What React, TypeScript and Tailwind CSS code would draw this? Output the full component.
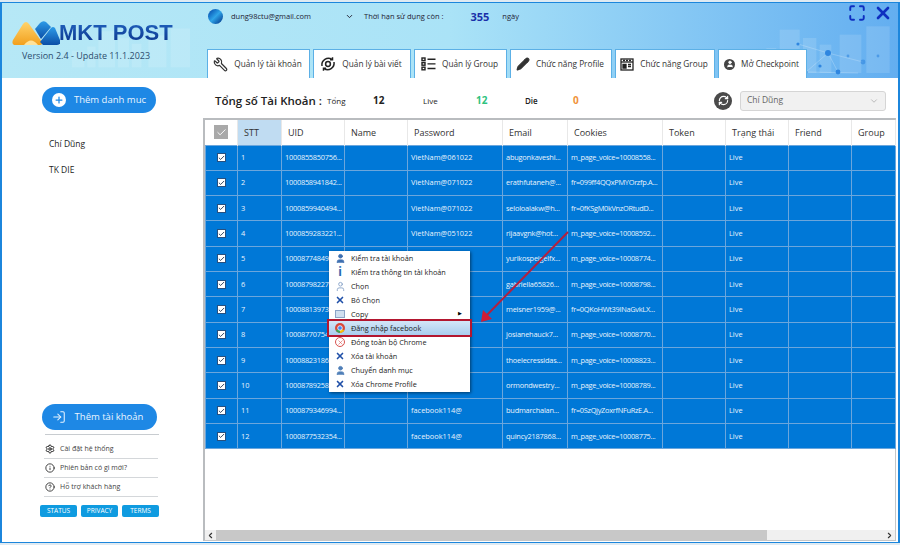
import { Check, ChevronDown, ChevronLeft, ChevronRight, CircleHelp, Info, LogIn, Maximize, Pencil, Plus, RefreshCw, Settings, User, Wrench, X } from "lucide-react";

const columns = [
  { label: "STT", w: "w-[44px]" },
  { label: "UID", w: "w-[63px]" },
  { label: "Name", w: "w-[63px]" },
  { label: "Password", w: "w-[95px]" },
  { label: "Email", w: "w-[65px]" },
  { label: "Cookies", w: "w-[95px]" },
  { label: "Token", w: "w-[63px]" },
  { label: "Trạng thái", w: "w-[63px]" },
  { label: "Friend", w: "w-[63px]" },
  { label: "Group", w: "w-[44px]" },
];

const rows = [
  ["1", "1000855850756...", "VietNam@061022", "abugonkaveshi...", "m_page_voice=10008558..."],
  ["2", "1000858941842...", "VietNam@071022", "erathfutaneh@...", "fr=099ff4QQxPMYOrzfp.A..."],
  ["3", "1000859940494...", "VietNam@071022", "seloloalakw@h...", "fr=0fKSgM0kVnzORtudD..."],
  ["4", "1000859283221...", "VietNam@051022", "rijaavgnk@hot...", "m_page_voice=10008592..."],
  ["5", "100087748495", "", "yurikospeigelfx...", "m_page_voice=10008774..."],
  ["6", "100087982275", "", "gabriella65826...", "m_page_voice=10008798..."],
  ["7", "100088139735", "", "meisner1959@...", "fr=0QKoHWt39INaGvkLX..."],
  ["8", "100087707547", "", "josianehauck7...", "m_page_voice=10008770..."],
  ["9", "100088231865", "", "thoelecressidas...", "m_page_voice=10008823..."],
  ["10", "100087892580", "", "ormondwestry...", "m_page_voice=10008789..."],
  ["11", "1000879346994...", "facebook114@", "budmarchalan...", "fr=0SzQjyZoxrfNFuRzE.A..."],
  ["12", "1000877532354...", "facebook114@", "quincy2187868...", "m_page_voice=10008775..."],
];

const tabs = [
  { label: "Quản lý tài khoản", w: "w-[103px]", icon: <Wrench size={15} strokeWidth={2} className="-scale-x-100" /> },
  {
    label: "Quản lý bài viết",
    w: "w-[98px]",
    icon: (
      <svg width="16" height="16" viewBox="0 0 16 16" fill="none" stroke="#222" strokeWidth="1.5">
        <circle cx="8" cy="8" r="2.4" />
        <path d="M2 10a6.5 6.5 0 0 1 10-6.5M14 6a6.5 6.5 0 0 1-10 6.5" />
        <path d="M12.5 1.2v2.6H10M3.5 14.8v-2.6H6" />
      </svg>
    ),
  },
  {
    label: "Quản lý Group",
    w: "w-[93px]",
    icon: (
      <svg width="15" height="14" viewBox="0 0 15 14" fill="none" stroke="#222" strokeWidth="1.4">
        <rect x="1" y="1" width="3" height="2.6" />
        <rect x="1" y="5.6" width="3" height="2.6" />
        <rect x="1" y="10.2" width="3" height="2.6" />
        <path d="M6.5 2.3h8M6.5 6.9h8M6.5 11.5h8" />
      </svg>
    ),
  },
  { label: "Chức năng Profile", w: "w-[102px]", icon: <Pencil size={14} fill="#333" stroke="#333" /> },
  {
    label: "Chức năng Group",
    w: "w-[100px]",
    icon: (
      <svg width="14" height="13" viewBox="0 0 14 13" fill="none" stroke="#222" strokeWidth="1.3">
        <rect x="1" y="1" width="12" height="11" />
        <path d="M1 4h12" />
        <path d="M3 2.5h8" strokeDasharray="2 1" />
        <path d="M3 6.5h3v3.5H3zM8 6.5h3M8 8.5h3" fill="#222" />
      </svg>
    ),
  },
  {
    label: "Mở Checkpoint",
    w: "w-[89px]",
    icon: (
      <span className="flex h-[11px] w-[11px] items-center justify-center rounded-full bg-[#444]">
        <User size={8} fill="#fff" stroke="#fff" />
      </span>
    ),
  },
];

const TinyX = () => <X size={10} strokeWidth={4} className="text-[#1f4fa8]" />;

const menu = [
  { label: "Kiểm tra tài khoản", icon: <User size={11} fill="#3d6fb0" stroke="#3d6fb0" /> },
  { label: "Kiểm tra thông tin tài khoản", icon: <span className="text-[12px] leading-none font-bold text-[#2a68b0]">i</span> },
  { label: "Chọn", icon: <User size={11} stroke="#8aa4c8" /> },
  { label: "Bỏ Chọn", icon: <TinyX /> },
  { label: "Copy", icon: <span className="h-[8px] w-[10px] border border-[#8aa4c8] bg-[#cfdff0]" />, arrow: true },
  {
    label: "Đăng nhập facebook",
    active: true,
    icon: (
      <svg width="10" height="10" viewBox="0 0 10 10">
        <circle cx="5" cy="5" r="5" fill="#d9483b" />
        <path d="M5 5L.7 7.5A5 5 0 0 0 5 10z" fill="#3aa757" />
        <path d="M5 5l4.3 2.5A5 5 0 0 1 5 10z" fill="#f4c20d" />
        <circle cx="5" cy="5" r="2.3" fill="#4285f4" stroke="#fff" strokeWidth=".8" />
      </svg>
    ),
  },
  {
    label: "Đóng toàn bộ Chrome",
    icon: (
      <span className="flex h-[10px] w-[10px] items-center justify-center rounded-full border border-[#d9534f]">
        <X size={7} strokeWidth={2} className="text-[#d9534f]" />
      </span>
    ),
  },
  { label: "Xóa tài khoản", icon: <TinyX /> },
  { label: "Chuyển danh mục", icon: <User size={11} fill="#4f7fb8" stroke="#4f7fb8" /> },
  { label: "Xóa Chrome Profile", icon: <TinyX /> },
];

const helpLinks = [
  { label: "Cài đặt hệ thống", icon: <Settings size={10} strokeWidth={2.4} /> },
  { label: "Phiên bản có gì mới?", icon: <Info size={10} strokeWidth={2} /> },
  { label: "Hỗ trợ khách hàng", icon: <CircleHelp size={10} strokeWidth={2} /> },
];

function Skyline({ className }: { className: string }) {
  return (
    <svg className={className} viewBox="0 0 180 60" fill="#ffffff" fillOpacity="0.13">
      <rect x="0" y="36" width="18" height="24" />
      <rect x="22" y="30" width="12" height="30" />
      <rect x="38" y="8" width="24" height="52" />
      <rect x="66" y="18" width="16" height="42" />
      <rect x="86" y="26" width="14" height="34" />
      <rect x="110" y="14" width="26" height="46" />
      <rect x="142" y="4" width="28" height="56" />
    </svg>
  );
}

// dots and lines at the right of the header
function Network({ className }: { className: string }) {
  return (
    <svg className={className} viewBox="0 0 120 40" fill="#2f86e0">
      <path d="M20 6 50 15 85 24M50 15 28 34 80 35M50 15 60 34" stroke="#ffffff" strokeOpacity="0.35" strokeWidth="0.6" fill="none" />
      <circle cx="20" cy="6" r="1.6" />
      <circle cx="50" cy="15" r="3" />
      <circle cx="42" cy="28" r="1.6" />
      <circle cx="28" cy="34" r="1.6" />
      <circle cx="60" cy="34" r="2.4" />
      <circle cx="85" cy="24" r="2.4" fillOpacity="0.6" />
      <circle cx="70" cy="18" r="1.4" fillOpacity="0.6" />
      <circle cx="100" cy="18" r="1.4" fillOpacity="0.6" />
    </svg>
  );
}

function Logo() {
  return (
    <svg width="48" height="24" viewBox="0 0 48 24">
      <defs>
        <linearGradient id="lg-o" x1="0" y1="0" x2="0" y2="1">
          <stop offset="0" stopColor="#ffd36b" />
          <stop offset="1" stopColor="#f2a01e" />
        </linearGradient>
        <linearGradient id="lg-b" x1="0" y1="0" x2="0" y2="1">
          <stop offset="0" stopColor="#2d9be8" />
          <stop offset="1" stopColor="#0b4ea6" />
        </linearGradient>
      </defs>
      <path d="M1 19 11 3q3-4 6 0l13 18q1 3-2 3H4q-5 0-3-5z" fill="url(#lg-o)" />
      <path d="M12 24q7-9 14 0z" fill="#ffe29a" />
      <path d="M23 8 28 2q3-3 6-1l5 5-10 12z" fill="url(#lg-b)" />
      <path d="M31 24 28 21 39 7q2-2 4 0l5 12q1 5-3 5z" fill="url(#lg-b)" />
    </svg>
  );
}

function Sidebar() {
  return (
    <aside className="flex w-[201px] shrink-0 flex-col pt-[9px]">
      <button className="ml-[40px] flex h-[26px] w-[114px] items-center justify-center gap-[8px] rounded-full bg-[#1e88e5] text-[9.5px] font-medium text-[#eaf5ff]">
        <span className="flex h-[14px] w-[14px] items-center justify-center rounded-full bg-white">
          <Plus size={10} strokeWidth={3} className="text-[#1e88e5]" />
        </span>
        Thêm danh muc
      </button>
      <div className="mt-[24px] ml-[47px] flex flex-col gap-[12px] text-[8.5px] leading-[14px] font-medium text-[#222]">
        <span>Chí Dũng</span>
        <span>TK DIE</span>
      </div>
      <button className="mt-[227px] ml-[40px] flex h-[26px] w-[115px] items-center justify-center gap-[9px] rounded-full bg-[#1e88e5] pr-[4px] text-[9.5px] font-medium text-[#eaf5ff]">
        <LogIn size={14} strokeWidth={1.8} />
        Thêm tài khoản
      </button>
      <div className="mt-[4px] ml-[43px] w-[114px] border-t border-[#c8ccd0]" />
      <div className="mt-[5px] ml-[42px] w-[114px]">
        {helpLinks.map((item) => (
          <div key={item.label} className="flex h-[19px] items-center gap-[5px] border-b border-[#d4d7da] text-[7px] text-[#444]">
            <span className="flex w-[11px] justify-center text-[#222]">{item.icon}</span>
            {item.label}
          </div>
        ))}
      </div>
      <div className="mt-[8px] ml-[38px] flex gap-[4px]">
        {["STATUS", "PRIVACY", "TERMS"].map((label) => (
          <span key={label} className="flex h-[12px] w-[37px] items-center justify-center rounded-[2px] bg-[#0f9be0] text-[6.5px] text-white">
            {label}
          </span>
        ))}
      </div>
    </aside>
  );
}

function AccountTable() {
  return (
    <div className="mr-[2px] mb-[1px] flex min-h-0 flex-1 flex-col border-t-2 border-r border-b border-l-2 border-t-[#b9bcbf] border-r-[#c4c6c8] border-b-[#c4c6c8] border-l-[#b9bcbf]">
      <table className="w-[690px] table-fixed border-collapse">
        <thead>
          <tr className="h-[25px] text-[9px] font-medium text-[#333]">
            <th className="w-[32px] border-r border-[#e8e8e8]">
              <span className="mx-auto flex h-[14px] w-[14px] items-center justify-center bg-[#a9a9a9]">
                <Check size={11} strokeWidth={2} className="text-white" />
              </span>
            </th>
            {columns.map((col) => (
              <th
                key={col.label}
                className={`${col.w} border-r border-[#e8e8e8] pl-[6px] text-left font-medium ${col.label === "STT" ? "bg-[#c0dcf2]" : ""}`}
              >
                {col.label}
              </th>
            ))}
          </tr>
        </thead>
        <tbody>
          {rows.map((r) => (
            <tr key={r[0]} className="h-[25.33px] bg-[#0078d7] text-[7.4px] text-[#e8f3fc]">
              <td className="border border-[#6ba6dc]">
                <span className="mx-auto flex h-[9px] w-[9px] items-center justify-center border border-[#27507f] bg-white">
                  <Check size={8} strokeWidth={3} className="text-[#1c3048]" />
                </span>
              </td>
              <td className="border border-[#6ba6dc] pl-[3px]">{r[0]}</td>
              <td className="overflow-hidden border border-[#6ba6dc] pl-[3px] tracking-[-0.25px] whitespace-nowrap">{r[1]}</td>
              <td className="border border-[#6ba6dc]" />
              <td className="border border-[#6ba6dc] pl-[3px]">{r[2]}</td>
              <td className="overflow-hidden border border-[#6ba6dc] pl-[3px] tracking-[-0.2px] whitespace-nowrap">{r[3]}</td>
              <td className="overflow-hidden border border-[#6ba6dc] pl-[3px] tracking-[-0.3px] whitespace-nowrap">{r[4]}</td>
              <td className="border border-[#6ba6dc]" />
              <td className="border border-[#6ba6dc] pl-[3px]">Live</td>
              <td className="border border-[#6ba6dc]" />
              <td className="border border-[#6ba6dc]" />
            </tr>
          ))}
        </tbody>
      </table>
      <div className="mt-auto flex h-[10px] items-center bg-[#f0f0f0] text-[#333]">
        <ChevronLeft size={9} strokeWidth={3} className="w-[11px] shrink-0" />
        <span className="h-full w-[551px] bg-[#c8c8c8]" />
        <ChevronRight size={9} strokeWidth={3} className="mr-[1px] ml-auto" />
      </div>
    </div>
  );
}

function ContextMenu() {
  return (
    <div className="absolute top-[251px] left-[329px] w-[141px] bg-white pb-[1px] text-[7.3px] text-[#222] shadow-[1px_1px_3px_rgba(0,0,0,0.5)]">
      {menu.map((item) => (
        <div
          key={item.label}
          className={`relative flex h-[14px] items-center ${item.active ? "bg-gradient-to-b from-[#d3e6f8] to-[#a9cdee] outline-2 outline-[#b3162f]" : ""}`}
        >
          <span className="flex w-[22px] justify-center">{item.icon}</span>
          {item.label}
          {item.arrow && <span className="absolute right-[8px] text-[5px] text-black">▶</span>}
        </div>
      ))}
    </div>
  );
}

export default function App() {
  return (
    <div
      className="relative h-[545px] w-[900px] overflow-hidden bg-[#dfeaf2] pt-[2px]"
      style={{ fontFamily: '"Open Sans", "Noto Sans", sans-serif' }}
    >
      <div className="flex h-[541px] w-[900px] flex-col border-x-2 border-y border-[#1c86dc] bg-white">
        <header className="relative flex h-[75px] shrink-0 bg-gradient-to-r from-[#b6e8f6] via-[#aae3f7] to-[#63aef0]">
          <Skyline className="absolute top-[12px] left-[70px] h-[63px] w-[125px]" />
          <Skyline className="absolute top-[15px] right-0 h-[60px] w-[150px]" />
          <Network className="absolute right-0 bottom-0 h-[40px] w-[120px]" />
          <div className="relative w-[201px] shrink-0 pt-[16px] pl-[10px]">
            <div className="flex items-center">
              <Logo />
              <span
                className="ml-[-1px] bg-gradient-to-b from-[#2467c4] to-[#0a2f86] bg-clip-text text-[22px] leading-[28px] font-bold text-transparent"
                style={{ fontFamily: '"Liberation Sans", sans-serif' }}
              >
                MKT POST
              </span>
            </div>
            <p className="mt-[2px] pl-[10px] text-[9px] font-medium text-[#2c4d6e]">Version 2.4 - Update 11.1.2023</p>
          </div>
          <div className="relative flex flex-1 flex-col">
            <div className="flex h-[46px] items-start pt-[6px] pl-[5px] text-[7.5px] font-medium text-[#223]">
              <span className="h-[15px] w-[15px] rounded-full bg-gradient-to-br from-[#0b3fa6] via-[#2fa4e8] to-[#0a2f86]" />
              <span className="ml-[8px] leading-[15px]">dung98ctu@gmail.com</span>
              <ChevronDown size={9} strokeWidth={2.5} className="mt-[3px] ml-[34px]" />
              <span className="ml-[10px] leading-[15px]">Thời hạn sử dụng còn :</span>
              <span className="ml-[27px] text-[11px] leading-[15px] font-bold text-[#1a2fa8]">355</span>
              <span className="ml-[13px] leading-[15px]">ngày</span>
              <Maximize size={18} strokeWidth={2.6} className="absolute top-[1px] right-[32px] text-[#0f2fc0]" />
              <X size={20} strokeWidth={3.2} className="absolute top-0 right-[5px] text-[#0f2fc0]" />
            </div>
            <div className="flex items-end gap-[3px] pl-[4px]">
              {tabs.map((tab) => (
                <div
                  key={tab.label}
                  className={`${tab.w} flex h-[29px] items-center justify-center gap-[6px] border-x border-t border-[#5cb0e6] bg-white pr-[2px] text-[8.25px] font-medium text-[#333]`}
                >
                  {tab.icon}
                  {tab.label}
                </div>
              ))}
            </div>
          </div>
        </header>
        <div className="flex min-h-0 flex-1">
          <Sidebar />
          <main className="flex min-w-0 flex-1 flex-col">
            <div className="flex h-[40px] shrink-0 items-center pt-[5px] text-[8px] font-medium text-[#222]">
              <span className="ml-[12px] w-[112px] text-[11.5px] font-semibold whitespace-nowrap">Tổng số Tài Khoản :</span>
              <span className="w-[46px]">Tổng</span>
              <span className="w-[50px] text-[10px] font-bold">12</span>
              <span className="w-[53px]">Live</span>
              <span className="w-[49px] text-[10px] font-bold text-[#2ec27e]">12</span>
              <span className="w-[48px] font-semibold">Die</span>
              <span className="w-[141px] text-[10px] font-bold text-[#f0923a]">0</span>
              <span className="flex h-[18px] w-[18px] items-center justify-center rounded-full bg-[#4a4a4a]">
                <RefreshCw size={11} strokeWidth={2.6} className="text-white" />
              </span>
              <div className="ml-[8px] flex h-[20px] w-[146px] items-center justify-between rounded-[3px] border border-[#d5d5d5] bg-[#f1f1f1] px-[6px] text-[8.5px] text-[#666]">
                Chí Dũng
                <ChevronDown size={10} className="text-[#b0b0b0]" />
              </div>
            </div>
            <AccountTable />
          </main>
        </div>
      </div>
      <ContextMenu />
      <svg className="pointer-events-none absolute top-0 left-0" width="900" height="545">
        <path d="M568 232 486 316" stroke="#b3203f" strokeWidth="2" fill="none" />
        <path d="M481 322 483 310 492 319z" fill="#d01c35" />
      </svg>
    </div>
  );
}
